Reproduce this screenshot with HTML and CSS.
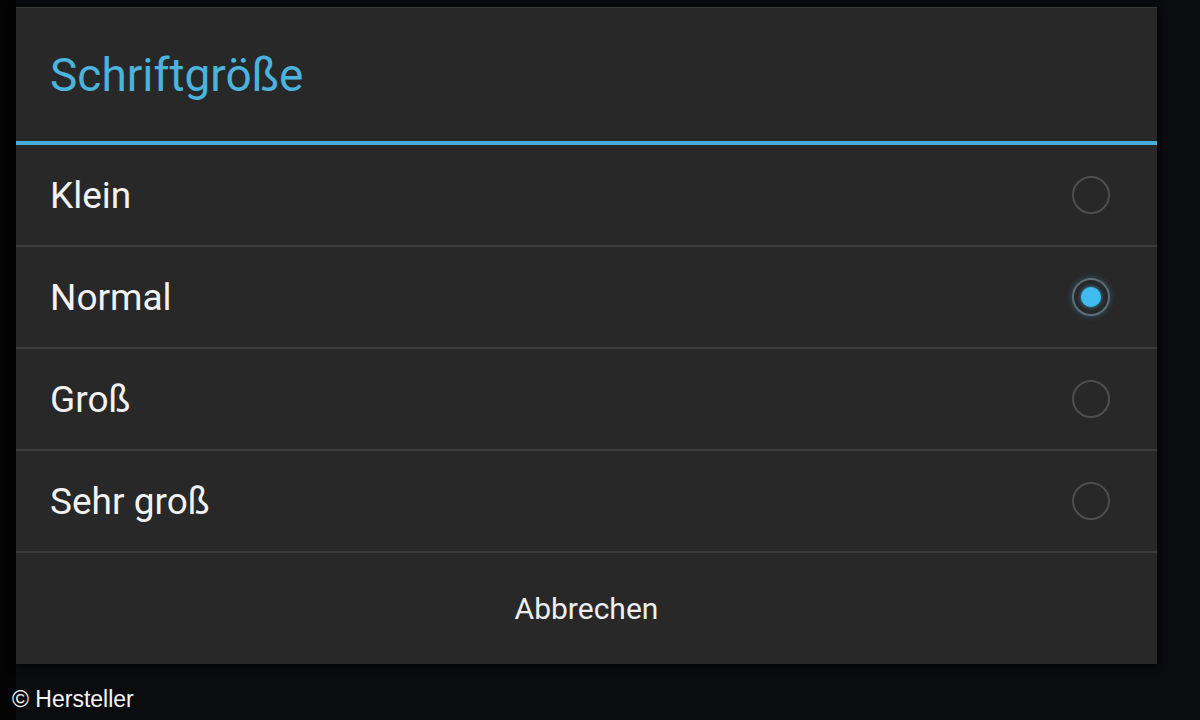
FILE: index.html
```html
<!DOCTYPE html>
<html lang="de">
<head>
<meta charset="utf-8">
<title>Schriftgröße</title>
<link rel="stylesheet" href="styles.css">
</head>
<body>
<div class="screen">
  <div class="dialog">
    <div class="dialog-title">Schriftgröße</div>
    <ul class="options">
      <li class="option">
        <span class="option-label">Klein</span>
        <span class="radio"></span>
      </li>
      <li class="option">
        <span class="option-label">Normal</span>
        <span class="radio radio-checked"><span class="radio-dot"></span></span>
      </li>
      <li class="option">
        <span class="option-label">Groß</span>
        <span class="radio"></span>
      </li>
      <li class="option">
        <span class="option-label">Sehr groß</span>
        <span class="radio"></span>
      </li>
    </ul>
    <div class="dialog-actions">
      <span class="action-button">Abbrechen</span>
    </div>
  </div>
  <div class="credit">© Hersteller</div>
</div>
</body>
</html>
```

FILE: styles.css
```css
html, body {
  margin: 0;
  padding: 0;
}

body {
  background: #0a0c0f;
  width: 1200px;
  height: 720px;
  overflow: hidden;
  font-family: Roboto, "Noto Sans", "DejaVu Sans", sans-serif;
}

.screen {
  padding: 7px 0 0 16px;
  background: linear-gradient(to right, #030303 0, #030303 16px, #0a0c0f 16px);
  height: 713px;
}

.dialog {
  width: 1141px;
  height: 657px;
  background: #282828;
  border-top: 1px solid #3a3a3a;
  box-sizing: border-box;
  display: flex;
  flex-direction: column;
  box-shadow: 0 2px 8px rgba(0, 0, 0, 0.9);
}

.dialog-title {
  height: 137px;
  flex: none;
  box-sizing: border-box;
  padding: 0 0 0 34px;
  display: flex;
  align-items: center;
  font-size: 46px;
  color: #4bb3dc;
  border-bottom: 4px solid #45aed8;
}

.options {
  list-style: none;
  margin: 0;
  padding: 0;
  flex: none;
}

.option {
  height: 100px;
  border-bottom: 2px solid #3c3c3c;
  display: flex;
  align-items: center;
  justify-content: space-between;
  padding: 0 47px 0 34px;
}

.option-label {
  font-size: 37px;
  color: #f2f2f2;
}

.radio {
  width: 34px;
  height: 34px;
  border-radius: 50%;
  border: 2px solid #4e4e4e;
  display: flex;
  align-items: center;
  justify-content: center;
}

.radio-checked {
  border-color: #5d6e78;
  box-shadow: 0 0 6px rgba(51, 181, 229, 0.35);
}

.radio-dot {
  width: 20px;
  height: 20px;
  border-radius: 50%;
  background: #3fbdf0;
  box-shadow: 0 0 4px rgba(63, 189, 240, 0.8);
}

.dialog-actions {
  flex: 1;
  display: flex;
  align-items: center;
  justify-content: center;
}

.action-button {
  font-size: 30px;
  color: #eeeeee;
}

.credit {
  margin: 22px 0 0 -4px;
  font-family: "Liberation Sans", Arial, sans-serif;
  font-size: 23px;
  color: #f5f5f5;
}
```
